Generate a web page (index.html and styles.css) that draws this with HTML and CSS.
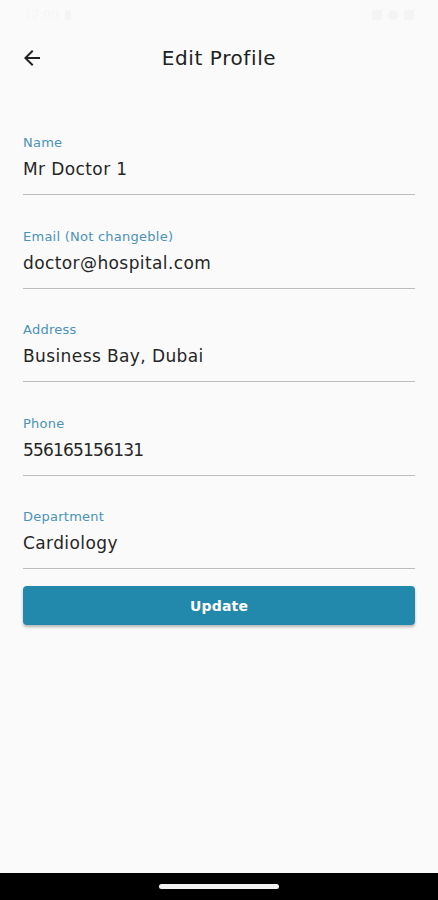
FILE: index.html
```html
<!DOCTYPE html>
<html lang="en">
<head>
<meta charset="utf-8">
<title>Edit Profile</title>
<link rel="stylesheet" href="styles.css">
</head>
<body>
<div class="screen">
  <div class="status-bar">
    <div class="status-left">
      <span class="time">12:00</span>
      <span class="dot"></span>
    </div>
    <div class="status-right">
      <span class="sq"></span><span class="sq round"></span><span class="sq"></span>
    </div>
  </div>
  <header class="app-bar">
    <button class="back" aria-label="Back">
      <svg width="24" height="24" viewBox="0 0 24 24"><path d="M20 11H7.83l5.59-5.59L12 4l-8 8 8 8 1.41-1.41L7.83 13H20v-2z" fill="#222"/></svg>
    </button>
    <h1 class="title">Edit Profile</h1>
  </header>
  <main class="form">
    <div class="field">
      <label class="label">Name</label>
      <div class="value">Mr Doctor 1</div>
    </div>
    <div class="field">
      <label class="label">Email (Not changeble)</label>
      <div class="value">doctor@hospital.com</div>
    </div>
    <div class="field">
      <label class="label">Address</label>
      <div class="value">Business Bay, Dubai</div>
    </div>
    <div class="field">
      <label class="label">Phone</label>
      <div class="value num">556165156131</div>
    </div>
    <div class="field">
      <label class="label">Department</label>
      <div class="value">Cardiology</div>
    </div>
    <button class="update">Update</button>
  </main>
  <div class="spacer"></div>
  <footer class="nav-bar"><span class="pill"></span></footer>
</div>
</body>
</html>
```
FILE: styles.css
```css
* { box-sizing: border-box; }
html, body { margin: 0; padding: 0; }
body {
  background: #fafafa;
  font-family: "DejaVu Sans", "Noto Sans", sans-serif;
  color: #222;
}
.screen {
  width: 438px;
  height: 900px;
  display: flex;
  flex-direction: column;
}
.status-bar {
  height: 30px;
  display: flex;
  justify-content: space-between;
  align-items: center;
  padding: 0 24px;
  color: #f6f6f6;
  font-size: 12px;
}
.status-left, .status-right { display: flex; align-items: center; gap: 6px; }
.dot { width: 6px; height: 10px; background: #f4f4f4; border-radius: 2px; }
.sq { width: 10px; height: 10px; background: #f4f4f4; }
.sq.round { border-radius: 50%; }
.app-bar {
  height: 56px;
  display: flex;
  align-items: center;
  position: relative;
  padding: 0 20px;
}
.back {
  background: none;
  border: 0;
  padding: 0;
  width: 24px;
  height: 24px;
  display: flex;
  z-index: 1;
}
.title {
  position: absolute;
  left: 0; right: 0;
  text-align: center;
  margin: 0;
  font-size: 20px;
  font-weight: 400;
  color: #222;
  letter-spacing: 0.6px;
}
.form {
  padding: 0 23px;
  display: flex;
  flex-direction: column;
}
.field {
  display: flex;
  flex-direction: column;
  padding-top: 49px;
  padding-bottom: 13px;
  border-bottom: 1.5px solid #bdbdbd;
}
.field + .field { padding-top: 33.5px; }
.label {
  font-size: 13px;
  line-height: 16px;
  color: #4a92b8;
  letter-spacing: 0.25px;
}
.value {
  margin-top: 6px;
  font-size: 17px;
  line-height: 24px;
  color: #262626;
  letter-spacing: 0.4px;
}
.value.num { letter-spacing: -0.8px; }
.update {
  margin-top: 17px;
  height: 39px;
  border: 0;
  border-radius: 4px;
  background: #2389ac;
  color: #fff;
  font-family: inherit;
  font-size: 14px;
  font-weight: 600;
  letter-spacing: 0.2px;
  box-shadow: 0 2px 3px rgba(0,0,0,0.28);
}
.spacer { flex: 1; }
.nav-bar {
  height: 27px;
  background: #000;
  display: flex;
  justify-content: center;
  align-items: center;
}
.pill { width: 120px; height: 5px; border-radius: 3px; background: #f2f2f2; }
```
